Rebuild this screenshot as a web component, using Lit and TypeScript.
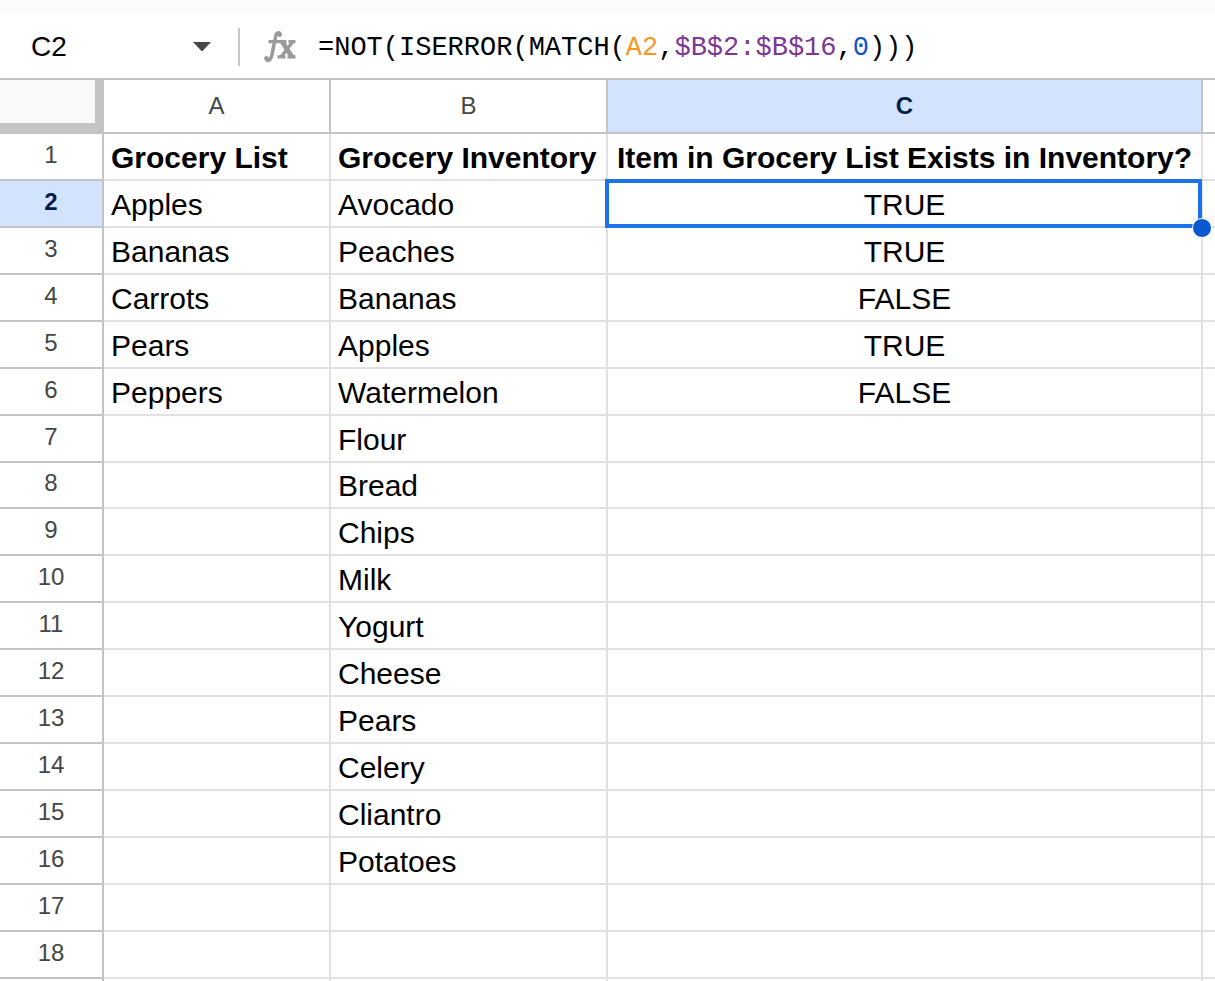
import { LitElement, html, css, svg } from "lit";
import { customElement, property } from "lit/decorators.js";
import { classMap } from "lit/directives/class-map.js";

const columns = ["A", "B", "C"];

const rows: string[][] = [
  ["Grocery List", "Grocery Inventory", "Item in Grocery List Exists in Inventory?"],
  ["Apples", "Avocado", "TRUE"],
  ["Bananas", "Peaches", "TRUE"],
  ["Carrots", "Bananas", "FALSE"],
  ["Pears", "Apples", "TRUE"],
  ["Peppers", "Watermelon", "FALSE"],
  ["", "Flour", ""],
  ["", "Bread", ""],
  ["", "Chips", ""],
  ["", "Milk", ""],
  ["", "Yogurt", ""],
  ["", "Cheese", ""],
  ["", "Pears", ""],
  ["", "Celery", ""],
  ["", "Cliantro", ""],
  ["", "Potatoes", ""],
  ["", "", ""],
  ["", "", ""],
];

@customElement("formula-bar")
export class FormulaBar extends LitElement {
  @property() cell = "C2";

  static styles = css`
    :host {
      display: flex;
      align-items: center;
      box-sizing: border-box;
      height: 80px;
      border-top: 15px solid #f9fbfd;
      border-bottom: 2px solid #c0c0c0;
      background: #fff;
    }
    .name {
      box-sizing: border-box;
      width: 184px;
      height: 40px;
      padding: 0 0 0 31px;
      border: 0;
      outline: 0;
      background: none;
      color: #000;
      font: 28px/40px "Liberation Sans", Arial, sans-serif;
    }
    .toggle {
      display: grid;
      place-items: center;
      width: 36px;
      height: 40px;
      padding: 0;
      border: 0;
      background: none;
    }
    .rule {
      width: 2px;
      height: 38px;
      margin-left: 18px;
      background: #c7c7c7;
    }
    .fx {
      width: 34px;
      height: 34px;
      margin: 0 20px 0 24px;
    }
    .formula {
      flex: 1;
      padding-top: 2px;
      outline: 0;
      color: #000;
      white-space: pre;
      font: 27px/40px "Liberation Mono", monospace;
    }
    .ref-a {
      color: #f7981d;
    }
    .ref-b {
      color: #7e3794;
    }
    .number {
      color: #1155cc;
    }
  `;

  render() {
    return html`
      <input class="name" aria-label="Name box" .value=${this.cell} />
      <button class="toggle" aria-label="Named ranges">
        <svg width="18" height="10" viewBox="0 0 18 10"><path d="M0 0H18L9 9.500Z" fill="#444746" /></svg>
      </button>
      <span class="rule"></span>
      <svg class="fx" viewBox="0 0 34 34" fill="none" stroke="#999b9a" aria-hidden="true">
        ${svg`
          <path d="M16.500 5C15.500 1.800 12.200 2.300 11.500 7L7.800 25.500C6.800 30.300 4.200 31.200 2.300 29.500" stroke-width="3.600" />
          <circle cx="15.600" cy="4.800" r="2.300" fill="#999b9a" stroke="none" />
          <circle cx="2.500" cy="28.500" r="2.400" fill="#999b9a" stroke="none" />
          <path d="M4.500 11.600H22.500M24.500 11.600H31.500M13.500 26.800H21.500M23.500 26.800H31.500" stroke-width="3.200" />
          <path d="M18 11.500L28 27" stroke-width="4.800" />
          <path d="M28.500 12L17 27" stroke-width="3.400" />
        `}
      </svg>
      <div class="formula" role="textbox" aria-label="Formula" contenteditable="true" spellcheck="false"><span>=NOT(ISERROR(MATCH(</span><span class="ref-a">A2</span><span>,</span><span class="ref-b">$B$2:$B$16</span><span>,</span><span class="number">0</span><span>)))</span></div>
    `;
  }
}

@customElement("sheet-grid")
export class SheetGrid extends LitElement {
  @property({ type: Number }) activeRow = 1;
  @property({ type: Number }) activeColumn = 2;

  static styles = css`
    :host {
      display: block;
    }
    table {
      width: 100%;
      table-layout: fixed;
      border-collapse: separate;
      border-spacing: 0;
      color: #000;
      font-family: "Liberation Sans", Arial, sans-serif;
    }
    .index-col {
      width: 104px;
    }
    .col-a {
      width: 227px;
    }
    .col-b {
      width: 277px;
    }
    .col-c {
      width: 595px;
    }
    th,
    td {
      box-sizing: border-box;
      height: 47px;
      padding: 0;
      border: 0 solid #e1e1e1;
      border-width: 0 2px 2px 0;
      white-space: nowrap;
    }
    thead th {
      height: 54px;
    }
    th {
      border-color: #c4c4c4;
      color: #444746;
      font-size: 24px;
      font-weight: 400;
      line-height: 28px;
    }
    tbody th {
      padding-bottom: 4px;
      line-height: 32px;
    }
    .corner {
      border: 0 solid #c4c4c4;
      border-width: 0 9px 11px 0;
      background: #f8f9fa;
    }
    th.active {
      background: #d3e3fd;
      color: #041e49;
      font-weight: 700;
    }
    td {
      padding: 2px 0 0 7px;
      text-align: left;
      font-size: 30px;
      line-height: 36px;
    }
    .title td {
      font-weight: 700;
    }
    td.result {
      padding-left: 0;
      text-align: center;
    }
    td.selected {
      position: relative;
    }
    .selection {
      position: absolute;
      inset: -2px -1px -2px -3px;
      border: 4px solid #1a73e8;
    }
    .handle {
      position: absolute;
      right: -11px;
      bottom: -12px;
      z-index: 1;
      width: 18px;
      height: 18px;
      border: 1px solid #fff;
      border-radius: 50%;
      background: #0b57d0;
    }
    tbody tr:nth-child(8) > * {
      height: 46px;
    }
    tr > :last-child {
      border-right: 0;
    }
  `;

  private cell(text: string, row: number, column: number) {
    const selected = row === this.activeRow && column === this.activeColumn;
    return html`<td class=${classMap({ result: column === 2, selected })}>${text}${selected
      ? html`<span class="selection"></span><span class="handle"></span>`
      : ""}</td>`;
  }

  render() {
    return html`
      <table>
        <colgroup>
          <col class="index-col" /><col class="col-a" /><col class="col-b" /><col class="col-c" /><col />
        </colgroup>
        <thead>
          <tr>
            <td class="corner"></td>
            ${columns.map(
              (name, i) => html`<th scope="col" class=${classMap({ active: i === this.activeColumn })}>${name}</th>`
            )}
            <th></th>
          </tr>
        </thead>
        <tbody>
          ${rows.map(
            (cells, r) => html`<tr class=${classMap({ title: r === 0 })}>
              <th scope="row" class=${classMap({ active: r === this.activeRow })}>${r + 1}</th>
              ${cells.map((text, c) => this.cell(text, r, c))}
              <td></td>
            </tr>`
          )}
          <tr>
            <th></th>
            <td></td>
            <td></td>
            <td></td>
            <td></td>
          </tr>
        </tbody>
      </table>
    `;
  }
}

@customElement("app-root")
export class AppRoot extends LitElement {
  static styles = css`
    :host {
      display: block;
      height: 100vh;
      overflow: hidden;
      background: #fff;
    }
  `;

  render() {
    return html`<formula-bar></formula-bar><sheet-grid></sheet-grid>`;
  }
}
